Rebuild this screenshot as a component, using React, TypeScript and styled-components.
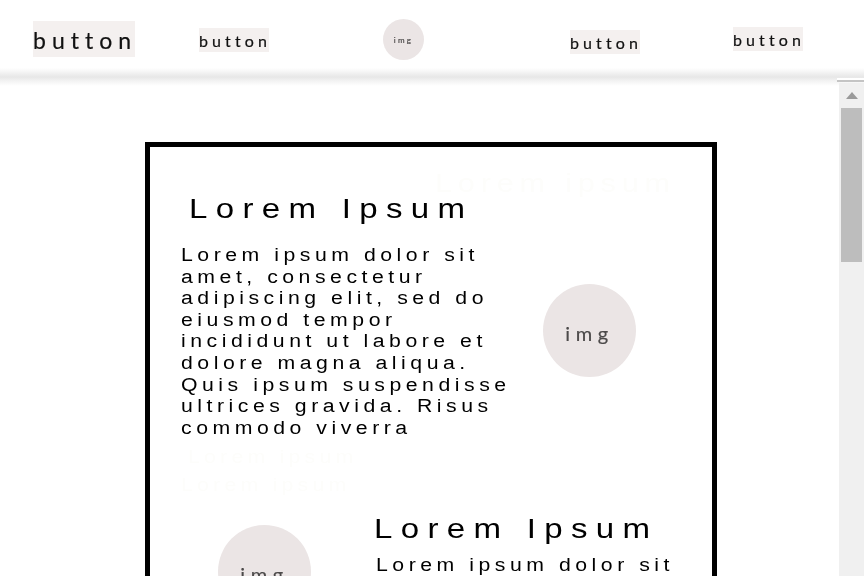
import React from 'react';
import styled, { createGlobalStyle, css } from 'styled-components';

const GlobalStyle = createGlobalStyle`
  html, body {
    margin: 0;
    height: 576px;
    overflow: hidden;
    background: #fff;
    font-family: 'Liberation Sans', Arial, sans-serif;
  }
`;

// the mockup's type is stretched sideways
const wideType = css`
  transform: scaleX(1.18);
  transform-origin: left center;
`;

const Page = styled.div`
  position: relative;
  width: 864px;
  height: 576px;
  overflow: hidden;
`;

const Header = styled.header`
  position: relative;
  z-index: 1;
  height: 72px;
  display: grid;
  grid-template-columns: 199px 184px 187px 163px 131px;
  background: #fff;
  &::after {
    content: '';
    position: absolute;
    top: 68px;
    left: 0;
    right: 0;
    height: 18px;
    background: linear-gradient(#fff, #e7e7e7 50%, #f3f3f3 72%, #fff);
  }
`;

const NavSlot = styled.div<{ $drop: number; $left?: number }>`
  padding-top: ${(p) => p.$drop}px;
  padding-left: ${(p) => p.$left ?? 0}px;
`;

const NavButton = styled.button<{ $large?: boolean }>`
  display: block;
  width: ${(p) => (p.$large ? 102 : 70)}px;
  height: ${(p) => (p.$large ? 36 : 24)}px;
  padding: ${(p) => (p.$large ? '1px 0 0 0' : '1px 0 0 0')};
  border: 0;
  background: #f4f0ef;
  color: #111;
  font-family: Lato, 'Liberation Sans', sans-serif;
  font-size: ${(p) => (p.$large ? 23 : 16)}px;
  letter-spacing: ${(p) => (p.$large ? 6 : 4.1)}px;
  text-align: left;
  white-space: nowrap;
  -webkit-text-stroke: 0.2px #111;
  filter: blur(0.3px);
`;

const Avatar = styled.div<{ $size: number; $text: number }>`
  width: ${(p) => p.$size}px;
  height: ${(p) => p.$size}px;
  box-sizing: border-box;
  padding-top: ${(p) => p.$text * 0.2}px;
  flex: none;
  display: flex;
  align-items: center;
  justify-content: center;
  border-radius: 50%;
  background: #ebe5e5;
  color: #4c4a4a;
  font-family: Lato, 'Liberation Sans', sans-serif;
  font-size: ${(p) => p.$text}px;
  letter-spacing: 0.28em;
  -webkit-text-stroke: 0.2px #4c4a4a;
  filter: blur(0.3px);
`;

const Body = styled.div`
  display: flex;
  height: 504px;
`;

const Content = styled.main`
  flex: 1;
  padding: 70px 0 0 145px;
  overflow: hidden;
`;

const Card = styled.section`
  position: relative;
  box-sizing: border-box;
  width: 572px;
  height: 600px;
  border: 5px solid #000;
  padding: 46px 0 0 31px;
`;

const GhostCorner = styled.div`
  ${wideType}
  position: absolute;
  top: 21px;
  left: 285px;
  color: #fdfdfb;
  font-size: 26px;
  letter-spacing: 4.9px;
  white-space: nowrap;
`;

const TopRow = styled.div`
  display: flex;
  align-items: flex-start;
`;

const TextColumn = styled.div`
  width: 362px;
`;

const Title = styled.h2<{ $indent?: number; $gap: number }>`
  ${wideType}
  margin: 0 0 ${(p) => p.$gap}px ${(p) => p.$indent ?? 0}px;
  color: #000;
  font-size: 28px;
  font-weight: 400;
  line-height: 32px;
  letter-spacing: 7.05px;
  white-space: nowrap;
`;

const Paragraph = styled.p`
  ${wideType}
  width: 284px;
  margin: 0;
  color: #000;
  font-size: 18px;
  line-height: 21.6px;
  letter-spacing: 3.83px;
`;

const GhostStack = styled.div`
  margin-top: 4px;
`;

const Ghost = styled.div<{ $indent?: number }>`
  ${wideType}
  margin-left: ${(p) => p.$indent ?? 0}px;
  color: #fdfdfb;
  font-size: 18px;
  line-height: 28px;
  letter-spacing: 3.6px;
  white-space: nowrap;
`;

const SideAvatar = styled.div`
  padding-top: 91px;
`;

const BottomRow = styled.div`
  display: flex;
  margin-top: 14px;
`;

const BottomAvatar = styled.div`
  width: 193px;
  padding: 12px 0 0 37px;
  box-sizing: border-box;
`;

const BottomParagraph = styled(Paragraph)`
  width: auto;
  margin-left: 2px;
  white-space: nowrap;
`;

const ScrollRule = styled.div`
  position: absolute;
  z-index: 2;
  top: 78px;
  left: 837px;
  width: 27px;
  height: 2px;
  border-bottom: 2px solid #c4c4c4;
  background: #fff;
`;

const Scrollbar = styled.aside`
  position: relative;
  z-index: 2;
  width: 25px;
  height: 493px;
  margin-top: 11px;
  background: #f0f0f0;
  display: flex;
  flex-direction: column;
  align-items: center;
`;

const ScrollArrow = styled.svg`
  display: block;
  margin: 9px 0 9px;
`;

const ScrollThumb = styled.div`
  width: 21px;
  height: 154px;
  background: #bdbdbd;
`;

export default function App() {
  return (
    <Page>
      <GlobalStyle />
      <Header>
        <NavSlot $drop={21} $left={33}>
          <NavButton $large>button</NavButton>
        </NavSlot>
        <NavSlot $drop={28}>
          <NavButton>button</NavButton>
        </NavSlot>
        <NavSlot $drop={19}>
          <Avatar $size={41} $text={8}>img</Avatar>
        </NavSlot>
        <NavSlot $drop={30}>
          <NavButton>button</NavButton>
        </NavSlot>
        <NavSlot $drop={27}>
          <NavButton>button</NavButton>
        </NavSlot>
      </Header>
      <ScrollRule />
      <Body>
        <Content>
          <Card>
            <GhostCorner>Lorem ipsum</GhostCorner>
            <TopRow>
              <TextColumn>
                <Title $indent={8} $gap={20}>Lorem Ipsum</Title>
                <Paragraph>
                  Lorem ipsum dolor sit amet, consectetur adipiscing elit, sed do eiusmod tempor
                  incididunt ut labore et dolore magna aliqua. Quis ipsum suspendisse ultrices
                  gravida. Risus commodo viverra
                </Paragraph>
                <GhostStack>
                  <Ghost $indent={7}>Lorem ipsum</Ghost>
                  <Ghost>Lorem ipsum</Ghost>
                </GhostStack>
              </TextColumn>
              <SideAvatar>
                <Avatar $size={93} $text={20}>img</Avatar>
              </SideAvatar>
            </TopRow>
            <BottomRow>
              <BottomAvatar>
                <Avatar $size={93} $text={20}>img</Avatar>
              </BottomAvatar>
              <div>
                <Title $gap={10}>Lorem Ipsum</Title>
                <BottomParagraph>Lorem ipsum dolor sit</BottomParagraph>
              </div>
            </BottomRow>
          </Card>
        </Content>
        <Scrollbar>
          <ScrollArrow width="12" height="7" viewBox="0 0 12 7">
            <path d="M6 0 L12 7 H0 Z" fill="#9a9a9a" />
          </ScrollArrow>
          <ScrollThumb />
        </Scrollbar>
      </Body>
    </Page>
  );
}
